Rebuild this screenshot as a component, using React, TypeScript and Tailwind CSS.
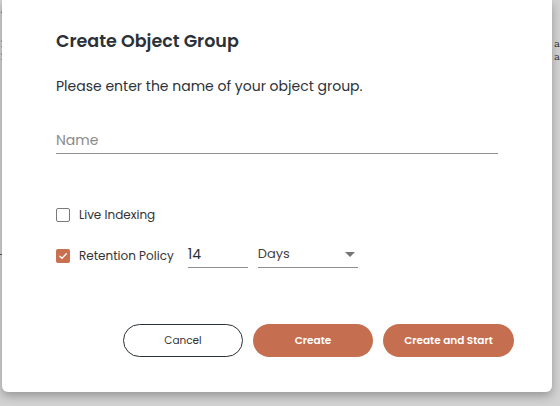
import { FC } from 'react';

const font = { fontFamily: 'Poppins, Inter, "Noto Sans", sans-serif' };
const serif = { fontFamily: '"DejaVu Serif", serif' };

const Checkbox: FC<{ checked?: boolean }> = ({ checked }) =>
  checked ? (
    <span className="flex h-[14px] w-[14px] items-center justify-center rounded-[2px] bg-[#c8704f]">
      <svg width="10" height="10" viewBox="0 0 10 10" fill="none">
        <path d="M1.8 5.2 L4 7.3 L8.3 2.8" stroke="white" strokeWidth="1.3" strokeLinecap="round" strokeLinejoin="round" />
      </svg>
    </span>
  ) : (
    <span className="h-[14px] w-[14px] rounded-[2px] border-[1.5px] border-[#7a7a7a] bg-white" />
  );

const App: FC = () => {
  return (
    <div className="relative h-[406px] w-[560px] overflow-hidden bg-[#d2d2d2]" style={font}>
      {/* page behind the dialog */}
      <div className="absolute left-0 top-[8px] text-[10px] leading-none text-black" style={serif}>•</div>
      <div className="absolute left-0 top-[38px] text-[9px] leading-[13px] text-[#333]" style={serif}>
        <div>1</div>
        <div>1</div>
      </div>
      <div className="absolute left-0 top-[254px] h-px w-[3px] bg-[#555]" />
      <div className="absolute left-[554px] top-[37px] text-[10px] leading-[13px] text-[#333]" style={serif}>
        <div>a</div>
        <div>a</div>
      </div>

      {/* dialog */}
      <div className="absolute left-[2px] top-0 flex h-[392px] w-[550px] flex-col rounded-b-md bg-white px-[54px] pt-[29px] shadow-[0_4px_10px_rgba(0,0,0,0.28)]">
        <h2 className="text-[17.5px] font-semibold leading-6 text-[#2b3138]">Create Object Group</h2>
        <p className="mt-[21px] text-[14px] leading-6 text-[#2b3138]">Please enter the name of your object group.</p>

        <div className="mt-[30px] w-[442px] border-b border-[#8f8f8f] pb-[1px]">
          <span className="text-[14px] leading-5 text-[#8a8a8a]">Name</span>
        </div>

        <div className="mt-[51px] flex items-center gap-[9px]">
          <Checkbox />
          <span className="text-[12px] leading-5 text-[#333]">Live Indexing</span>
        </div>

        <div className="mt-[19px] flex items-center">
          <Checkbox checked />
          <span className="ml-[9px] text-[12px] leading-5 text-[#333]">Retention Policy</span>
          <div className="ml-[14px] w-[60px] border-b border-[#8f8f8f] pb-[3px] text-[14px] leading-5 text-[#2b3138]">14</div>
          <div className="ml-[10px] flex w-[100px] items-center justify-between border-b border-[#8f8f8f] pb-[3px] pr-[3px]">
            <span className="text-[13px] leading-5 text-[#444]">Days</span>
            <svg width="10" height="5" viewBox="0 0 10 5">
              <path d="M0 0 L10 0 L5 5 Z" fill="#757575" />
            </svg>
          </div>
        </div>

        <div className="mt-[56px] flex gap-[10px] pl-[67px]">
          <button className="h-[33px] w-[120px] shrink-0 rounded-full border border-[#2b3138] bg-white text-[10.5px] text-[#333]">Cancel</button>
          <button className="h-[33px] w-[120px] shrink-0 rounded-full bg-[#c56e50] text-[10.5px] font-semibold text-white">Create</button>
          <button className="h-[33px] w-[131px] shrink-0 rounded-full bg-[#c56e50] text-[10.5px] font-semibold text-white">Create and Start</button>
        </div>
      </div>
    </div>
  );
};

export default App;
